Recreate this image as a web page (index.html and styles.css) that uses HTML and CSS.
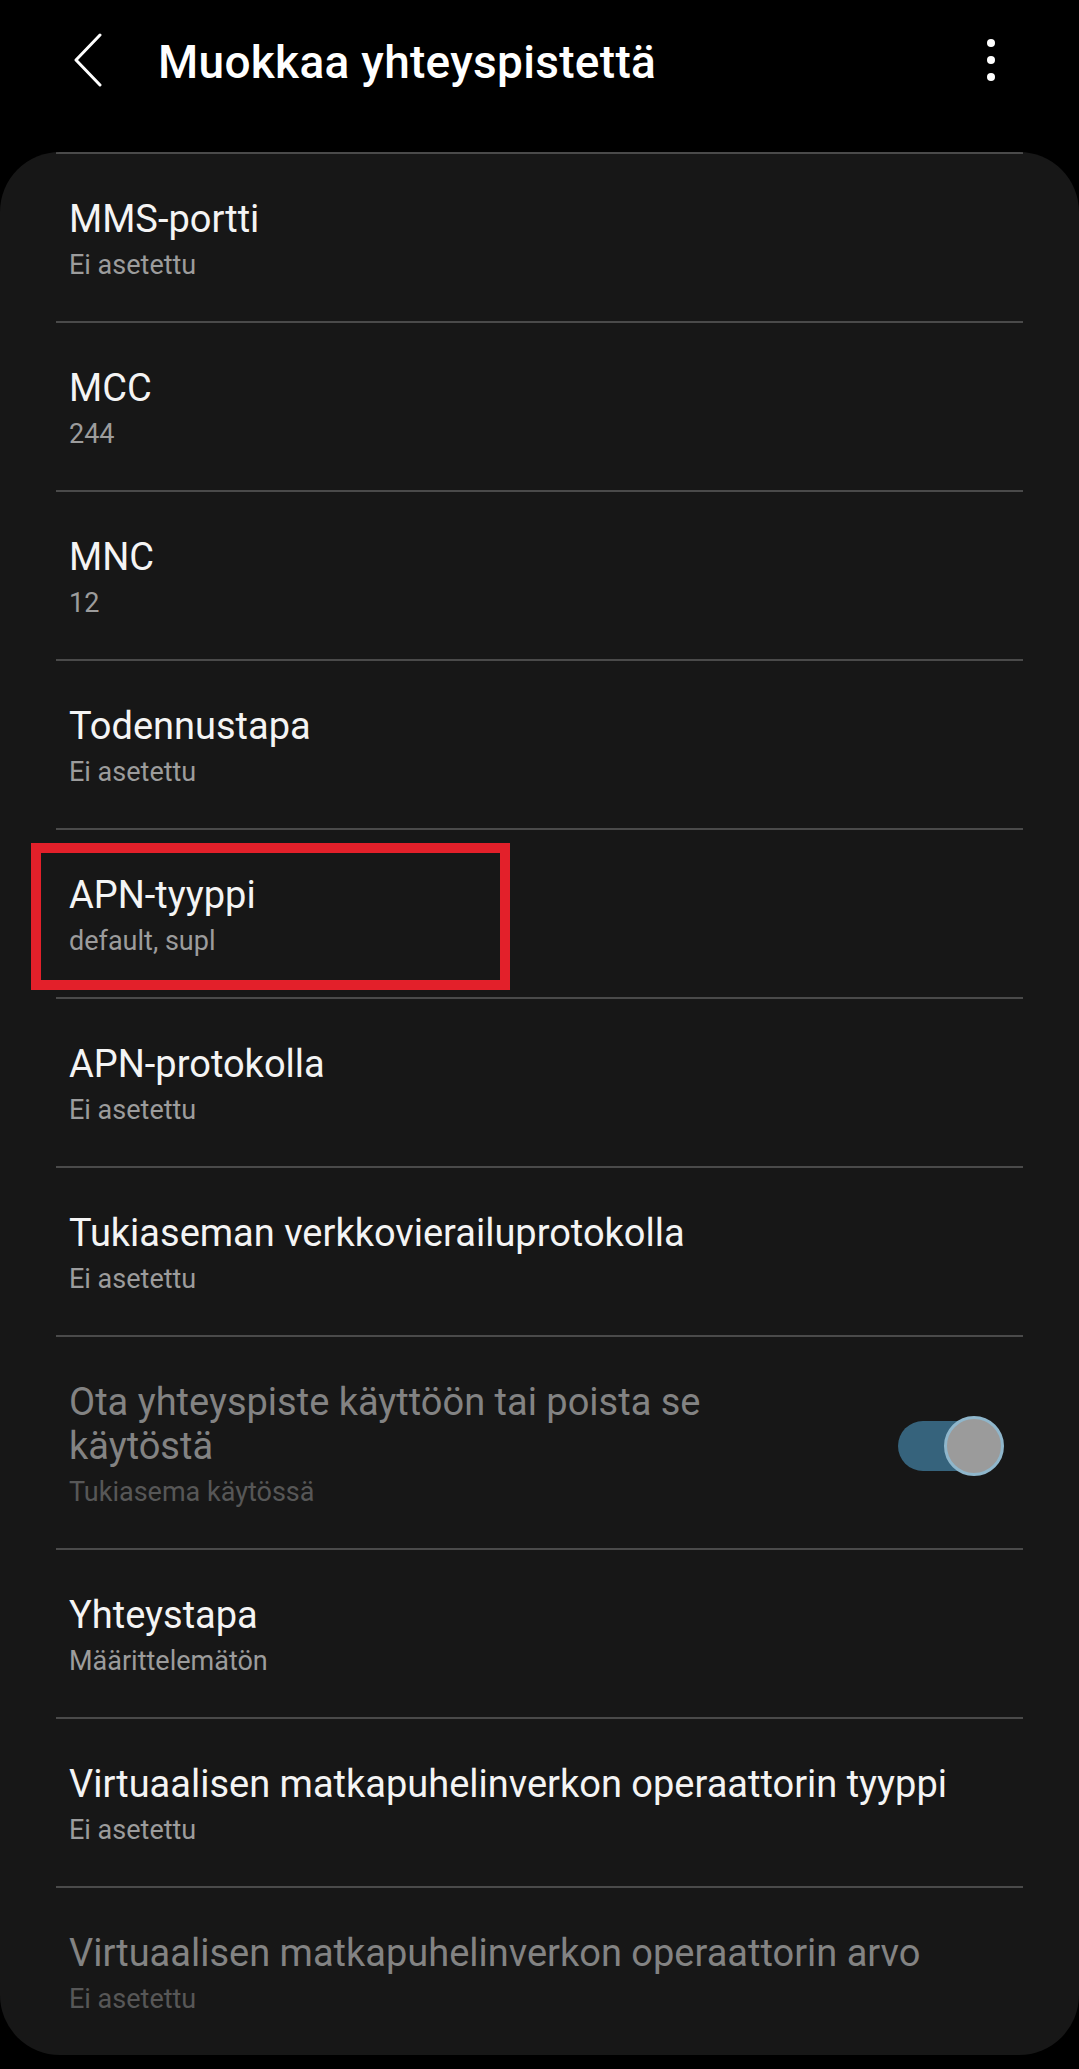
FILE: index.html
```html
<!DOCTYPE html>
<html lang="fi">

<head>
  <meta charset="UTF-8">
  <meta name="viewport" content="width=device-width, initial-scale=1.0">
  <title>Muokkaa yhteyspistettä</title>
  <link rel="stylesheet" href="styles.css">
</head>

<body>
  <header class="topbar">
    <button class="back" type="button" aria-label="Takaisin">
      <svg width="32" height="54" viewBox="0 0 32 54">
        <polyline points="28,2 4,27 28,52" fill="none" stroke="#fff" stroke-width="3" stroke-linecap="round" stroke-linejoin="round" />
      </svg>
    </button>
    <h1 class="title">Muokkaa yhteyspistettä</h1>
    <button class="more" type="button" aria-label="Lisää">
      <span></span><span></span><span></span>
    </button>
  </header>

  <main class="card">
    <div class="row">
      <div class="text">
        <span class="name">MMS-portti</span>
        <span class="value">Ei asetettu</span>
      </div>
    </div>
    <div class="row">
      <div class="text">
        <span class="name">MCC</span>
        <span class="value">244</span>
      </div>
    </div>
    <div class="row">
      <div class="text">
        <span class="name">MNC</span>
        <span class="value">12</span>
      </div>
    </div>
    <div class="row">
      <div class="text">
        <span class="name">Todennustapa</span>
        <span class="value">Ei asetettu</span>
      </div>
    </div>
    <div class="row marked">
      <div class="text">
        <span class="name">APN-tyyppi</span>
        <span class="value">default, supl</span>
      </div>
    </div>
    <div class="row">
      <div class="text">
        <span class="name">APN-protokolla</span>
        <span class="value">Ei asetettu</span>
      </div>
    </div>
    <div class="row">
      <div class="text">
        <span class="name">Tukiaseman verkkovierailuprotokolla</span>
        <span class="value">Ei asetettu</span>
      </div>
    </div>
    <div class="row disabled">
      <div class="text narrow">
        <span class="name">Ota yhteyspiste käyttöön tai poista se käytöstä</span>
        <span class="value">Tukiasema käytössä</span>
      </div>
      <span class="switch on"><span class="knob"></span></span>
    </div>
    <div class="row">
      <div class="text">
        <span class="name">Yhteystapa</span>
        <span class="value">Määrittelemätön</span>
      </div>
    </div>
    <div class="row">
      <div class="text">
        <span class="name">Virtuaalisen matkapuhelinverkon operaattorin tyyppi</span>
        <span class="value">Ei asetettu</span>
      </div>
    </div>
    <div class="row disabled">
      <div class="text">
        <span class="name">Virtuaalisen matkapuhelinverkon operaattorin arvo</span>
        <span class="value">Ei asetettu</span>
      </div>
    </div>
  </main>
</body>

</html>
```

FILE: styles.css
```css
body {
  margin: 0;
  background-color: #000;
  font-family: Roboto, "Noto Sans", sans-serif;
  color: #f4f4f4;
}

.topbar {
  display: flex;
  align-items: center;
  height: 120px;
  padding: 0 84px 0 72px;
}

.back,
.more {
  background: none;
  border: 0;
  padding: 0;
  cursor: pointer;
}

.back svg {
  display: block;
}

.title {
  margin: 3px 0 0 54px;
  font-size: 46px;
  font-weight: 500;
  letter-spacing: 0.3px;
  line-height: 50px;
  color: #fff;
}

.more {
  margin-left: auto;
  display: flex;
  flex-direction: column;
  gap: 9px;
}

.more span {
  width: 8px;
  height: 8px;
  border-radius: 50%;
  background-color: #fff;
}

.card {
  margin-top: 32px;
  height: 1903px;
  overflow: hidden;
  background-color: #171717;
  border-radius: 60px;
}

.row {
  position: relative;
  display: flex;
  align-items: center;
  margin: 0 56px;
  padding: 43px 0 37px 13px;
  border-top: 2px solid #4a4a4a;
}

.text {
  display: flex;
  flex-direction: column;
  flex: 1;
}

.text.narrow {
  flex: none;
  max-width: 740px;
}

.name {
  font-size: 38px;
  line-height: 44px;
  color: #f4f4f4;
}

.value {
  margin-top: 5px;
  font-size: 27px;
  line-height: 38px;
  color: #9c9c9c;
}

.disabled .name {
  color: #838383;
}

.disabled .value {
  color: #575757;
}

/* merkintä kuvakaappauksessa */
.marked:after {
  content: "";
  position: absolute;
  left: -25px;
  top: 13px;
  width: 459px;
  height: 127px;
  border: 10px solid #e3202a;
}

.switch {
  position: relative;
  margin-left: auto;
  margin-right: 19px;
  width: 106px;
  height: 60px;
}

.switch:before {
  content: "";
  position: absolute;
  left: 0;
  top: 5px;
  width: 90px;
  height: 50px;
  border-radius: 25px;
  background-color: #36637c;
}

.switch .knob {
  position: absolute;
  right: 0;
  top: 0;
  width: 54px;
  height: 54px;
  border-radius: 50%;
  background-color: #9b9b9b;
  border: 3px solid #8fb6cb;
}
```
